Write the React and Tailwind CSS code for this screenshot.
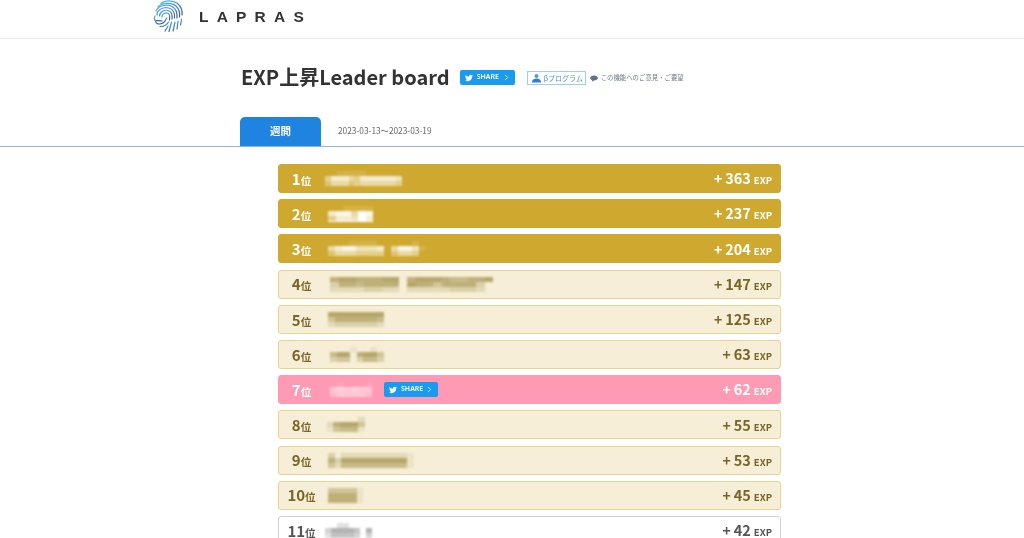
import React from 'react';
import { FaTwitter } from 'react-icons/fa';
import { ChevronRight } from 'lucide-react';

const rows = [
  { rank: 1, exp: 363, kind: 'gold', x: 1, w: 5.9, cells: ['..11111.......', '47775477777760', '35553455555540'] },
  { rank: 2, exp: 237, kind: 'gold', underline: true, x: 4, w: 7.5, cells: ['..1111', '788598', '477697'] },
  { rank: 3, exp: 204, kind: 'gold', x: 4, w: 7, cells: ['...1111.....1.', '57886667058861', '35554444035540'] },
  { rank: 4, exp: 147, kind: 'cream', x: 6, w: 8.6, cells: ['6776667706777655667', '3665666607664666630', '2222332202222233320'] },
  { rank: 5, exp: 125, kind: 'cream', x: 4, w: 7, cells: ['77777777', '46666665', '23333332'] },
  { rank: 6, exp: 63, kind: 'cream', x: 6, w: 6.7, cells: ['...1..1..', '57706774.', '34403553.'] },
  { rank: 7, exp: 62, kind: 'pink', share: true, x: 6, w: 7, cells: ['.1...1', '454544', '344443'] },
  { rank: 8, exp: 55, kind: 'cream', x: 3, w: 6.3, cells: ['.....2', '267774', '145551'] },
  { rank: 9, exp: 53, kind: 'cream', x: 4, w: 6.6, cells: ['3.22222222221', '6377777777771', '4255555555551'] },
  { rank: 10, exp: 45, kind: 'cream', x: 4, w: 5.8, cells: ['444441', '666661', '666661'] },
  { rank: 11, exp: 42, kind: 'plain', x: 1, w: 5.9, cells: ['..22.....', '355554.50', '244443.30'] },
];

const styles = {
  gold: { box: 'bg-[#cfa92f] border-[#cfa92f] text-white', cell: 'bg-white' },
  cream: { box: 'bg-[#f6eed6] border-[#e9d48f] text-[#7a6528]', cell: 'bg-[#a3924c]' },
  pink: { box: 'bg-[#ff9ab4] border-[#ff9ab4] text-white', cell: 'bg-white' },
  plain: { box: 'bg-white border-[#d2d2d2] text-[#555555]', cell: 'bg-[#777777]' },
};

// the names are pixelated in the picture, so each one is a small grid of cells
function Mosaic({ cells, color, x = 0, w = 6, underline }) {
  return (
    <div className="relative flex flex-col blur-[1.2px]" style={{ marginLeft: x }}>
      {cells.map((line, i) => (
        <div key={i} className="flex h-[5px]">
          {line.split('').map((c, j) => (
            <div key={j} className={`h-[5px] ${color}`} style={{ width: w, opacity: c === '.' ? 0 : Number(c) / 9 }} />
          ))}
        </div>
      ))}
      {underline && <div className="absolute left-0 right-0 bottom-[-1px] h-px bg-white" />}
    </div>
  );
}

function ShareButton({ className }) {
  return (
    <div className={`flex items-center h-[15px] w-[54px] rounded-[2px] bg-[#1a9bf0] text-white pl-[5px] pr-[4px] ${className}`}>
      <FaTwitter className="text-[8px]" />
      <span className="ml-[4px] text-[7px] font-semibold flex-1 font-['Noto_Sans',sans-serif]">SHARE</span>
      <ChevronRight size={9} strokeWidth={2} />
    </div>
  );
}

function Row({ row }) {
  const s = styles[row.kind];
  return (
    <div className={`flex items-center h-[29px] rounded-[3px] border-[1.5px] pr-[8px] ${s.box}`}>
      <div className="w-[45px] text-center leading-none font-bold text-[15px]">
        {row.rank}<span className="text-[10.5px]">位</span>
      </div>
      <Mosaic cells={row.cells} color={s.cell} x={row.x} w={row.w} underline={row.underline} />
      {row.share && <ShareButton className="ml-[12px]" />}
      <div className="ml-auto flex items-baseline font-bold leading-none">
        <span className="text-[14px]">+</span>
        <span className="ml-[3px] text-[14.5px]">{row.exp}</span>
        <span className="ml-[3px] text-[9.5px]">EXP</span>
      </div>
    </div>
  );
}

function Logo() {
  return (
    <svg width="31" height="32" viewBox="0 0 31 32" fill="none" strokeLinecap="round" strokeWidth="1.2">
      <defs>
        <linearGradient id="lg" x1="0" y1="0" x2="0.5" y2="1">
          <stop offset="0" stopColor="#55b8ea" />
          <stop offset="1" stopColor="#3a62a8" />
        </linearGradient>
      </defs>
      <g stroke="url(#lg)">
        <path d="M8 3.5C12 0 20 0 24.5 3.5C28 6.5 29.5 11 29 15" />
        <path d="M5 7C9 2.5 19 2 23.5 6.5C26.5 9.5 27 13 26.5 17" />
        <path d="M3 11C5 6 13 3.5 19 6.5C23.5 9 24.5 13 24 18" />
        <path d="M4 15C4 10 10 6.5 16 8C20.5 9.5 22 13 21.5 18" />
        <path d="M6.5 16C6.5 12 11 9.5 15 10.5C18.5 11.5 19.5 15 19 19" />
        <path d="M9 17C8.5 14 12 12.5 14.5 13C16.5 13.5 17 16 16.5 20" />
        <path d="M2 16C1 18 1 20 3 20.5C5 21 7 20 9 21" />
        <path d="M2.5 21C3 23 4 24 6 24C9 24 12 23 13.5 18" />
        <path d="M7 26.5C10 26.5 14 25 15.5 22" />
        <path d="M12 31L15 26" />
        <path d="M16 31.5L18.5 22" />
        <path d="M20 31L22 22" />
        <path d="M24 29L25 21" />
        <path d="M27.5 25L28.5 19" />
      </g>
    </svg>
  );
}

export default function App() {
  return (
    <div className="h-[538px] overflow-hidden bg-white text-[#333333] blur-[0.35px] font-['Noto_Sans_CJK_JP',sans-serif]">
      <header className="h-[39px] border-b border-[#ebebeb] pl-[153px] flex items-start">
        <Logo />
        <span className="ml-[15px] mt-[5px] text-[#333333] text-[15.5px] font-bold tracking-[8.2px] font-['Liberation_Sans',sans-serif]">LAPRAS</span>
      </header>

      <div className="h-[78px] pl-[241px] pt-[24px] flex items-start">
        <h1 className="text-[20px] leading-[28px] font-semibold text-[#333333]">EXP上昇Leader board</h1>
        <ShareButton className="ml-[10px] mt-[7px] w-[55px]" />
        <div className="ml-[12px] mt-[8px] flex items-center h-[14px] w-[59px] border border-[#9fcdf3] text-[#4f95d6] text-[7px] pl-[3px]">
          <svg width="11" height="10" viewBox="0 0 11 10" className="mr-[2px]">
            <circle cx="5.5" cy="3" r="2" fill="#4f9fe0" />
            <path d="M1 9.5C1 6.5 3 5.5 5.5 5.5C8 5.5 10 6.5 10 9.5Z" fill="#2f7fd0" />
          </svg>
          βプログラム
        </div>
        <div className="ml-[4px] mt-[8px] flex items-center h-[14px] text-[6.4px] text-[#6f7a8c]">
          <svg width="8" height="7" viewBox="0 0 8 7" className="mr-[3px]">
            <path d="M4 0.5C6.2 0.5 7.8 1.5 7.8 3C7.8 4.5 6.2 5.4 4 5.4L2 6.8L2.2 5.2C1 4.8 0.2 4 0.2 3C0.2 1.5 1.8 0.5 4 0.5Z" fill="#5d7290" />
          </svg>
          この機能へのご意見・ご要望
        </div>
      </div>

      <div className="h-[29px] pl-[240px] flex items-stretch border-b border-[#8fb4e4] box-content">
        <div className="w-[81px] rounded-t-[5px] bg-[#1e84e0] text-white text-[10.5px] font-bold pb-[2px] flex items-center justify-center">週間</div>
        <div className="ml-[17px] pb-[2px] flex items-center text-[8.3px] text-[#666666]">2023-03-13〜2023-03-19</div>
      </div>

      <div className="w-[503px] ml-[278px] mt-[17px] flex flex-col gap-[6.2px]">
        {rows.map(row => <Row key={row.rank} row={row} />)}
      </div>
    </div>
  );
}
